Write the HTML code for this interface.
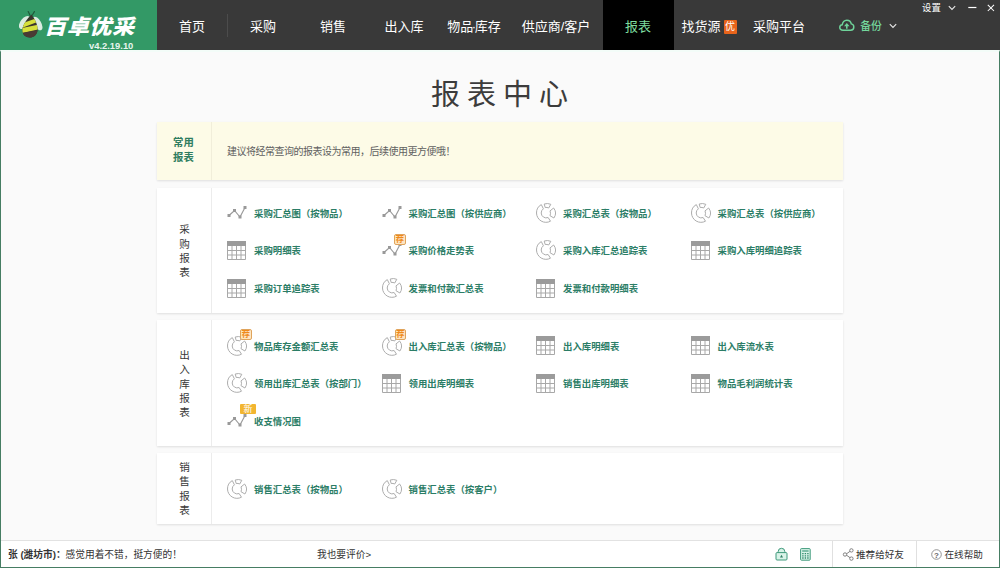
<!DOCTYPE html>
<html lang="zh-CN">
<head>
<meta charset="utf-8">
<title>报表中心</title>
<style>
*{box-sizing:border-box;margin:0;padding:0}
html,body{width:1000px;height:568px;overflow:hidden;background:#fafafa;font-family:"Liberation Sans","Noto Sans CJK SC",sans-serif;}
body{position:relative}
.abs{position:absolute}
#frame{position:absolute;left:0;top:50px;width:1000px;height:518px;border:1px solid #467d63;border-top:2px solid #f3fcf8;pointer-events:none;z-index:50}
#hdr{position:absolute;left:0;top:0;width:1000px;height:50px;background:#393939}
#logo{position:absolute;left:0;top:0;width:157px;height:50px;background:#339966}
#logo .name{position:absolute;left:44px;top:12px;font-size:20.5px;line-height:30px;font-weight:900;font-style:italic;color:#fff;letter-spacing:0.5px;white-space:nowrap;transform:scaleX(1.08);transform-origin:left}
#logo .ver{position:absolute;left:89px;top:39.5px;font-size:9.4px;font-weight:bold;line-height:12px;color:#e8f5ee;white-space:nowrap}
.nav{position:absolute;top:1px;height:50px;line-height:52px;font-size:13px;color:#fff;text-align:center;white-space:nowrap;transform:translateX(-50%)}
.sep{position:absolute;left:227px;top:14px;width:1px;height:23px;background:#4c4c4c}
#act{position:absolute;left:603px;top:0;width:70.5px;height:50px;background:#000}
.badge{position:absolute;left:723.5px;top:20px;width:13px;height:14px;background:#e8641b;color:#fff;font-size:10px;line-height:14px;text-align:center;border-radius:1px}
.tr{position:absolute;top:0;font-size:11px;color:#fff;line-height:16px;white-space:nowrap}
h1{position:absolute;left:0;width:1000px;top:73.5px;text-align:center;font-size:29px;line-height:42px;font-weight:400;color:#3c3c3c;letter-spacing:7px;padding-left:6px}
.panel{position:absolute;left:157px;width:686px;background:#fff;box-shadow:0 1px 2px rgba(0,0,0,.11)}
.panel .side{position:absolute;left:0;top:0;bottom:0;width:55px;border-right:1px solid #ececec;display:flex;align-items:center;justify-content:center;text-align:center;font-size:10.6px;line-height:14.4px;color:#383838;font-weight:400;padding-top:1px;padding-left:1px}
.it{position:absolute;font-size:9.4px;font-weight:bold;color:#2b7d66;line-height:16px;white-space:nowrap;letter-spacing:0;margin-top:1px}
.ic{position:absolute}
.bj{position:absolute;width:11.5px;height:11px;background:#fde6c2;border:1px solid #e0a45c;border-radius:2px;color:#ef8a1c;font-size:8.5px;line-height:9px;text-align:center;font-weight:bold;overflow:hidden}
.bx{position:absolute;width:16px;height:10.5px;background:#f2b530;border-radius:1px;color:#fff;font-size:9px;line-height:10.5px;text-align:center;overflow:hidden}
#sb{position:absolute;left:1px;top:540px;width:998px;height:27px;background:#fff;border-top:1px solid #e2e2e2;font-size:9.7px;color:#333}
#sb span{position:absolute;top:0;line-height:27px;white-space:nowrap}
</style>
</head>
<body>
<div id="hdr">
  <div id="logo">
    <svg class="abs" style="left:19px;top:10px" width="24" height="29" viewBox="0 0 24 29">
  <path d="M11 5.2 L9.2 1.6 M13.2 5.2 L15.4 1.6" stroke="#1f5a3b" stroke-width="1.2" stroke-linecap="round" fill="none"/>
  <ellipse cx="5.6" cy="12.5" rx="4.2" ry="7.6" transform="rotate(38 5.6 12.5)" fill="#e9f3ec" opacity=".92"/>
  <ellipse cx="18.6" cy="13.5" rx="3.6" ry="7.6" transform="rotate(-30 18.6 13.5)" fill="#e9f3ec" opacity=".92"/>
  <clipPath id="beeclip"><path d="M12.4 4.6 C15 8 19 14 18.6 20 C18.2 25 14.5 27.6 10.8 27.6 C6.6 27.6 3 24.6 3.4 19.6 C3.8 14 9.6 7.6 12.4 4.6 Z"/></clipPath>
  <g clip-path="url(#beeclip)">
    <rect x="0" y="0" width="24" height="29" fill="#3a352c"/>
    <path d="M4 13 L20 7.4 L20 11.4 L4 17.4 Z" fill="#d6e03c"/>
    <path d="M1 18.4 L21 14.4 L21 19.2 L1 23.4 Z" fill="#d6e03c"/>
    <path d="M0 23.6 L22 19.6 L22 29 L0 29 Z" fill="#4a3b34"/>
  </g>
</svg>
    <div class="name">百卓优采</div>
    <div class="ver">v4.2.19.10</div>
  </div>
  <div class="nav" style="left:192px">首页</div>
  <div class="sep"></div>
  <div class="nav" style="left:263px">采购</div>
  <div class="nav" style="left:333px">销售</div>
  <div class="nav" style="left:404px">出入库</div>
  <div class="nav" style="left:474px">物品<span style="margin:0 -1.5px">·</span>库存</div>
  <div class="nav" style="left:556px">供应商/客户</div>
  <div id="act"></div>
  <div class="nav" style="left:638px;color:#7ddc9f">报表</div>
  <div class="nav" style="left:701px">找货源</div>
  <div class="badge">优</div>
  <div class="nav" style="left:779px">采购平台</div>
  <div class="nav" style="left:871px;font-size:10.8px;color:#74d69c;font-weight:500;margin-top:-0.8px">备份</div>
  <div class="tr" style="left:922px;font-size:9.4px">设置</div>
  <svg class="abs" style="left:948px;top:5px" width="8" height="6" viewBox="0 0 8 6"><path d="M0.8 1.2 L4 4.4 L7.2 1.2" fill="none" stroke="#e8e8e8" stroke-width="1.1"/></svg>
  <svg class="abs" style="left:967.5px;top:6.3px" width="9" height="3" viewBox="0 0 9 3"><path d="M0.3 1.5 H8.4" fill="none" stroke="#fff" stroke-width="1.2"/></svg>
  <svg class="abs" style="left:987px;top:4px" width="8" height="8" viewBox="0 0 8 8"><path d="M0.8 0.8 L7 7 M7 0.8 L0.8 7" fill="none" stroke="#fff" stroke-width="1.05"/></svg>
  <svg class="abs" style="left:839px;top:19px" width="15.6" height="12.7" viewBox="0 0 16 13"><path d="M4 11.5 C2 11.5 0.8 10.2 0.8 8.6 C0.8 7 2 5.9 3.4 5.8 C3.6 3.4 5.4 1.2 8 1.2 C10.4 1.2 12.2 2.8 12.6 5 C14.2 5.2 15.2 6.6 15.2 8.2 C15.2 10 13.8 11.5 12 11.5 Z" fill="none" stroke="#6fd39a" stroke-width="1.5"/><path d="M8 10 V6.4" fill="none" stroke="#6fd39a" stroke-width="1.6"/><path d="M5.2 7.4 L8 4.2 L10.8 7.4 Z" fill="#6fd39a"/></svg>
  <svg class="abs" style="left:889px;top:22.8px" width="8" height="6" viewBox="0 0 8 6"><path d="M0.8 1.2 L4 4.4 L7.2 1.2" fill="none" stroke="#e8e8e8" stroke-width="1.1"/></svg>
</div>
<h1>报表中心</h1>

<div class="panel" style="top:122px;height:58px;background:#fdfbe7">
  <div class="side" style="border-right-color:#f1eeda;color:#2f7d60;font-weight:bold;font-size:10.4px;line-height:14.6px;padding-top:0;padding-right:2px;padding-bottom:1px">常用<br>报表</div>
  <div class="abs" style="left:70px;top:21.5px;font-size:10px;line-height:16px;color:#606060;white-space:nowrap;letter-spacing:-0.5px">建议将经常查询的报表设为常用，后续使用更方便哦！</div>
</div>

<div class="panel" style="top:188px;height:125px">
  <div class="side">采<br>购<br>报<br>表</div>
</div>
<div class="panel" style="top:320px;height:125.5px">
  <div class="side" style="padding-top:2px">出<br>入<br>库<br>报<br>表</div>
</div>
<div class="panel" style="top:453px;height:70.5px">
  <div class="side" style="padding-top:1px">销<br>售<br>报<br>表</div>
</div>

<svg width="0" height="0" style="position:absolute">
<defs>
<g id="i-line">
  <polyline points="2,10.5 7.5,5.5 13,12 18,2.5" fill="none" stroke="#999" stroke-width="1.15"/>
  <rect x="0.5" y="9" width="3" height="3" fill="#999"/>
  <rect x="6" y="4" width="3" height="3" fill="#999"/>
  <rect x="11.5" y="10.5" width="3" height="3" fill="#999"/>
  <rect x="16.5" y="1" width="3" height="3" fill="#999"/>
</g>
<g id="i-table">
  <rect x="0" y="0" width="19" height="19" fill="#fff"/>
  <rect x="0" y="0" width="19" height="5" fill="#9b9b9b"/>
  <path d="M0.5 5v13.5h18V5M5 5v13.5M9.5 5v13.5M14 5v13.5M0.5 9.5h18M0.5 14h18" fill="none" stroke="#a8a8a8" stroke-width="1"/>
</g>
<g id="i-pie" fill="#fff" stroke="#adadad" stroke-width="1">
  <path d="M5.3 1.6 A9.5 9.5 0 0 0 0.5 10 A9.5 9.5 0 0 0 14.5 18.2 L12.1 14.5 A5 5 0 0 1 5.2 10 A5 5 0 0 1 7.4 5.8 Z"/>
  <path d="M8.2 1 A9.5 9.5 0 0 1 14.8 1.3 L12.7 5 A5.3 5.3 0 0 0 9.2 4.5 Z"/>
  <path d="M17.6 5 A8.4 8.4 0 0 1 17.9 15 L14 12.7 A6 6 0 0 0 14 7.9 Z"/>
</g>
</defs>
</svg>
<div id="items">
<svg class="ic" style="left:227px;top:205px" width="20" height="14" viewBox="0 0 20 14"><use href="#i-line"/></svg>
<div class="it" style="left:254px;top:205px">采购汇总图（按物品）</div>
<svg class="ic" style="left:381.5px;top:205px" width="20" height="14" viewBox="0 0 20 14"><use href="#i-line"/></svg>
<div class="it" style="left:408.5px;top:205px">采购汇总图（按供应商）</div>
<svg class="ic" style="left:536px;top:203px" width="20" height="20" viewBox="0 0 20 20"><use href="#i-pie"/></svg>
<div class="it" style="left:563px;top:205px">采购汇总表（按物品）</div>
<svg class="ic" style="left:690.5px;top:203px" width="20" height="20" viewBox="0 0 20 20"><use href="#i-pie"/></svg>
<div class="it" style="left:717.5px;top:205px">采购汇总表（按供应商）</div>
<svg class="ic" style="left:227px;top:240.5px" width="19" height="19" viewBox="0 0 19 19"><use href="#i-table"/></svg>
<div class="it" style="left:254px;top:242px">采购明细表</div>
<svg class="ic" style="left:381.5px;top:242px" width="20" height="14" viewBox="0 0 20 14"><use href="#i-line"/></svg>
<div class="bj" style="left:394.0px;top:234px">荐</div>
<div class="it" style="left:408.5px;top:242px">采购价格走势表</div>
<svg class="ic" style="left:536px;top:240px" width="20" height="20" viewBox="0 0 20 20"><use href="#i-pie"/></svg>
<div class="it" style="left:563px;top:242px">采购入库汇总追踪表</div>
<svg class="ic" style="left:690.5px;top:240.5px" width="19" height="19" viewBox="0 0 19 19"><use href="#i-table"/></svg>
<div class="it" style="left:717.5px;top:242px">采购入库明细追踪表</div>
<svg class="ic" style="left:227px;top:278.5px" width="19" height="19" viewBox="0 0 19 19"><use href="#i-table"/></svg>
<div class="it" style="left:254px;top:280px">采购订单追踪表</div>
<svg class="ic" style="left:381.5px;top:278px" width="20" height="20" viewBox="0 0 20 20"><use href="#i-pie"/></svg>
<div class="it" style="left:408.5px;top:280px">发票和付款汇总表</div>
<svg class="ic" style="left:536px;top:278.5px" width="19" height="19" viewBox="0 0 19 19"><use href="#i-table"/></svg>
<div class="it" style="left:563px;top:280px">发票和付款明细表</div>
<svg class="ic" style="left:227px;top:335.5px" width="20" height="20" viewBox="0 0 20 20"><use href="#i-pie"/></svg>
<div class="bj" style="left:240px;top:328.5px">荐</div>
<div class="it" style="left:254px;top:337.5px">物品库存金额汇总表</div>
<svg class="ic" style="left:381.5px;top:335.5px" width="20" height="20" viewBox="0 0 20 20"><use href="#i-pie"/></svg>
<div class="bj" style="left:394.5px;top:328.5px">荐</div>
<div class="it" style="left:408.5px;top:337.5px">出入库汇总表（按物品）</div>
<svg class="ic" style="left:536px;top:336.0px" width="19" height="19" viewBox="0 0 19 19"><use href="#i-table"/></svg>
<div class="it" style="left:563px;top:337.5px">出入库明细表</div>
<svg class="ic" style="left:690.5px;top:336.0px" width="19" height="19" viewBox="0 0 19 19"><use href="#i-table"/></svg>
<div class="it" style="left:717.5px;top:337.5px">出入库流水表</div>
<svg class="ic" style="left:227px;top:373px" width="20" height="20" viewBox="0 0 20 20"><use href="#i-pie"/></svg>
<div class="it" style="left:254px;top:375px">领用出库汇总表（按部门）</div>
<svg class="ic" style="left:381.5px;top:373.5px" width="19" height="19" viewBox="0 0 19 19"><use href="#i-table"/></svg>
<div class="it" style="left:408.5px;top:375px">领用出库明细表</div>
<svg class="ic" style="left:536px;top:373.5px" width="19" height="19" viewBox="0 0 19 19"><use href="#i-table"/></svg>
<div class="it" style="left:563px;top:375px">销售出库明细表</div>
<svg class="ic" style="left:690.5px;top:373.5px" width="19" height="19" viewBox="0 0 19 19"><use href="#i-table"/></svg>
<div class="it" style="left:717.5px;top:375px">物品毛利润统计表</div>
<svg class="ic" style="left:227px;top:412.5px" width="20" height="14" viewBox="0 0 20 14"><use href="#i-line"/></svg>
<div class="bx" style="left:240px;top:403.5px">新</div>
<div class="it" style="left:254px;top:412.5px">收支情况图</div>
<svg class="ic" style="left:227px;top:478.5px" width="20" height="20" viewBox="0 0 20 20"><use href="#i-pie"/></svg>
<div class="it" style="left:254px;top:480.5px">销售汇总表（按物品）</div>
<svg class="ic" style="left:381.5px;top:478.5px" width="20" height="20" viewBox="0 0 20 20"><use href="#i-pie"/></svg>
<div class="it" style="left:408.5px;top:480.5px">销售汇总表（按客户）</div>
</div><!--/items-->

<div id="sb">
  <span style="left:7px"><b>张 (潍坊市)：</b>感觉用着不错，挺方便的！</span>
  <span style="left:316px">我也要评价&gt;</span>
  <svg class="abs" style="left:774px;top:6px" width="13" height="14" viewBox="0 0 13 14"><path d="M3.2 6 V4.6 A3.3 3.3 0 0 1 9.8 4.6 V6" fill="#d9f3e8" stroke="#3f9a7c" stroke-width="1"/><rect x="1" y="5.6" width="11" height="7.4" rx="1" fill="#d9f3e8" stroke="#3f9a7c" stroke-width="1"/><path d="M6.5 7.8 L8 10.6 H5 Z" fill="#2f7f64"/></svg>
  <svg class="abs" style="left:799px;top:7px" width="11" height="13" viewBox="0 0 11 13"><rect x="0.6" y="0.6" width="9.6" height="11.6" rx="0.8" fill="#d9f3e8" stroke="#3f9a7c" stroke-width="1"/><path d="M2.2 3 H8.6" stroke="#3f9a7c" stroke-width="1.2"/><path d="M2.2 5.6h1.4M4.7 5.6h1.4M7.2 5.6h1.4M2.2 7.8h1.4M4.7 7.8h1.4M7.2 7.8h1.4M2.2 10h1.4M4.7 10h1.4M7.2 10h1.4" stroke="#2f8a6c" stroke-width="1.3"/></svg>
  <div class="abs" style="left:830.5px;top:0;width:1px;height:26px;background:#e0e0e0"></div>
  <div class="abs" style="left:914.5px;top:0;width:1px;height:26px;background:#e0e0e0"></div>
  <svg class="abs" style="left:841px;top:7px" width="12" height="13" viewBox="0 0 12 13"><path d="M3.6 6.5 L9 2.6 M3.6 6.5 L9 10.4" stroke="#777" stroke-width="0.9" fill="none"/><circle cx="3" cy="6.5" r="1.7" fill="#fff" stroke="#777" stroke-width="0.9"/><circle cx="9.4" cy="2.4" r="1.7" fill="#fff" stroke="#777" stroke-width="0.9"/><circle cx="9.4" cy="10.6" r="1.7" fill="#fff" stroke="#777" stroke-width="0.9"/></svg>
  <span style="left:855px;font-size:9.6px">推荐给好友</span>
  <svg class="abs" style="left:930px;top:8px" width="11" height="11" viewBox="0 0 11 11"><circle cx="5.5" cy="5.5" r="4.8" fill="#fff" stroke="#888" stroke-width="0.9"/><text x="5.5" y="8.6" font-size="8" font-weight="bold" text-anchor="middle" fill="#666" font-family="Liberation Sans, sans-serif">?</text></svg>
  <span style="left:943.5px;font-size:9.6px">在线帮助</span>
</div>
<div id="frame"></div>
</body>
</html>
